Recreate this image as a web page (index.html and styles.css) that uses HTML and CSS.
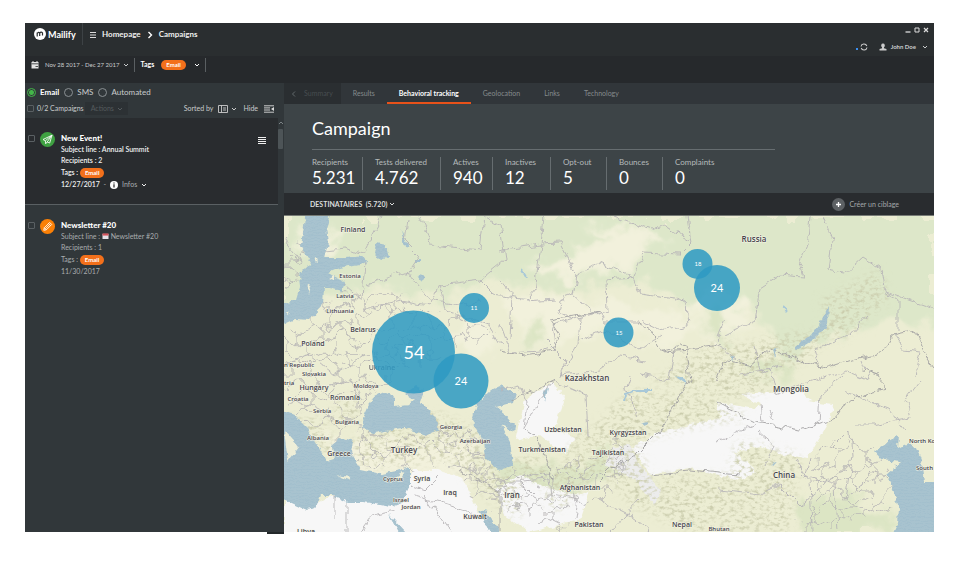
FILE: index.html
```html
<!DOCTYPE html>
<html lang="en">
<head>
<meta charset="utf-8">
<title>Mailify - Campaigns</title>
<link rel="stylesheet" href="styles.css">
</head>
<body>
<svg class="defs" width="0" height="0" aria-hidden="true">
  <symbol id="chev" viewBox="0 0 8 8"><path d="M2 3 4 5 6 3" fill="none" stroke="currentColor" stroke-width="1"/></symbol>
</svg>
<div class="app">
  <header class="top">
    <div class="brand">
      <svg class="mark" viewBox="0 0 12 12"><circle cx="6" cy="6" r="6" fill="#fff"/><path d="M3.200 8.500V4.500M3.200 5.500Q4.600 3.600 5.700 5V8M5.700 5Q7.200 3.200 8.500 4.800V7.500" fill="none" stroke="#292d2f" stroke-width="1.200"/></svg>
      <span>Mailify</span>
    </div>
    <nav class="crumbs">
      <button class="plain" aria-label="Menu"><svg class="ic8" viewBox="0 0 8 8"><path d="M1 1.500H7M1 4H7M1 6.500H7" stroke="#ddd" stroke-width="1"/></svg></button>
      <a href="#">Homepage</a>
      <svg class="ic8" viewBox="0 0 8 8"><path d="M2.500 1 5.500 4 2.500 7" fill="none" stroke="#fff" stroke-width="1.400"/></svg>
      <a href="#">Campaigns</a>
    </nav>
    <div class="right">
      <div class="winctl">
        <button class="plain" aria-label="Minimize"><svg class="ic6" viewBox="0 0 6 6"><path d="M0.500 5H5.500" stroke="#ddd" stroke-width="1.300"/></svg></button>
        <button class="plain" aria-label="Maximize"><svg class="ic6" viewBox="0 0 6 6"><path d="M1 1H5V5H1Z" fill="none" stroke="#ddd" stroke-width="1"/></svg></button>
        <button class="plain" aria-label="Close"><svg class="ic6" viewBox="0 0 6 6"><path d="M1 1 5 5M5 1 1 5" stroke="#ddd" stroke-width="1.200"/></svg></button>
      </div>
      <div class="user">
        <i class="dot"></i>
        <button class="plain" aria-label="Refresh"><svg class="ic8" viewBox="0 0 8 8"><path d="M1 3.500A3 3 0 0 1 6.800 3M7 4.500A3 3 0 0 1 1.200 5" fill="none" stroke="#ccc" stroke-width="1.100"/></svg></button>
        <button class="plain account"><svg class="ic8" viewBox="0 0 8 8"><path d="M4 .5a1.800 2 0 0 1 1 3.700L5 5.200 7.500 6V7.500H.5V6L3 5.200V4.200A1.800 2 0 0 1 4 .5Z" fill="#ccc"/></svg>John Doe<svg class="ic8 sp"><use href="#chev"/></svg></button>
      </div>
    </div>
  </header>
  <div class="filters">
    <button class="plain date"><svg class="ic8" viewBox="0 0 8 8"><path d="M.5 1H7.500V7.500H.5Z" fill="#e4e4e4"/><path d="M.5 2.800H7.500M4.500 5.500H7" stroke="#292d2f" stroke-width=".8"/><path d="M2 0V2M6 0V2" stroke="#e4e4e4"/></svg><span>Nov 28 2017 - Dec 27 2017</span><svg class="ic8"><use href="#chev"/></svg></button>
    <div class="tags"><b>Tags</b><span class="pill">Email</span><button class="plain" aria-label="More tags"><svg class="ic8"><use href="#chev"/></svg></button></div>
  </div>
  <div class="body">
    <aside class="side">
      <div class="kinds">
        <label class="on"><input type="radio" name="kind" checked>Email</label>
        <label><input type="radio" name="kind">SMS</label>
        <label><input type="radio" name="kind">Automated</label>
      </div>
      <div class="tools">
        <label><input type="checkbox">0/2 Campaigns</label>
        <button class="actions" disabled>Actions <svg class="ic8"><use href="#chev"/></svg></button>
        <span class="push">Sorted by</span>
        <button class="plain" aria-label="Sort order"><svg class="sort" viewBox="0 0 20 8"><path d="M.5 .5H9.500V7.500H.5ZM3.500 .5V7.500M5 3H8M5 5H8" fill="none" stroke="#ccc" stroke-width=".9"/><path d="m14 3 2 2 2-2" fill="none" stroke="#ccc"/></svg></button>
        <button class="plain hide">Hide<svg class="hideic" viewBox="0 0 10 8"><path d="M0 .8H10M0 2.900H6M0 5H6M0 7.200H10" stroke="#ddd" stroke-width=".9"/><path d="M10 2 7 4 10 6Z" fill="#ddd"/></svg></button>
      </div>
      <div class="listwrap">
        <ul class="list">
          <li class="item active">
            <input type="checkbox" aria-label="Select New Event!">
            <svg class="badge" viewBox="0 0 14 14"><circle cx="7" cy="7" r="7" fill="#3fa142"/><path d="M11.200 3 2.800 7 5 8.200 5.300 11 6.700 9.300 9 10.300ZM11.200 3 5 8.200M11.200 3 6.700 9.300" fill="none" stroke="#fff" stroke-width=".8"/></svg>
            <div class="info">
              <h3>New Event!</h3>
              <p>Subject line : Annual Summit</p>
              <p>Recipients : 2</p>
              <p class="tagline">Tags : <span class="pill">Email</span></p>
              <p class="when">12/27/2017 <span class="dim">&nbsp; -</span><svg class="ic8 inf" viewBox="0 0 8 8"><circle cx="4" cy="4" r="4" fill="#fff"/><path d="M4 1.500V2.500M4 3.300V6.500" stroke="#222" stroke-width="1.200"/></svg><span class="dim">Infos</span><svg class="ic8"><use href="#chev"/></svg></p>
            </div>
            <button class="plain burger" aria-label="Campaign menu"><svg class="ic8" viewBox="0 0 8 8"><path d="M0 .5H8M0 2.500H8M0 4.500H8M0 6.500H8" stroke="#eee" stroke-width="1"/></svg></button>
          </li>
          <li class="item">
            <input type="checkbox" aria-label="Select Newsletter #20">
            <svg class="badge" viewBox="0 0 14 14"><circle cx="7" cy="7" r="7" fill="#fb8006"/><path d="M3.500 10.500 4 8.200 9 3.200 10.900 5.100 5.900 10.100ZM8 4.200 9.900 6.100M4 8.200 5.900 10.100M5 9.100 8.900 5.200" fill="none" stroke="#fff" stroke-width=".8"/></svg>
            <div class="info">
              <h3>Newsletter #20</h3>
              <p>Subject line : <svg class="cal" viewBox="0 0 8 7"><path d="M.5 1H7.500V7H.5Z" fill="#e6e2e8"/><path d="M.5 .5H7.500V3H.5Z" fill="#d5545c"/></svg> Newsletter #20</p>
              <p>Recipients : 1</p>
              <p class="tagline">Tags : <span class="pill">Email</span></p>
              <p class="when">11/30/2017</p>
            </div>
          </li>
        </ul>
        <div class="scroll"><svg class="ic6" viewBox="0 0 6 6"><path d="M1 4 3 2 5 4" fill="none" stroke="#7b8285"/></svg><i></i></div>
      </div>
    </aside>
    <main class="main">
      <nav class="tabs">
        <a class="back" href="#"><svg class="ic8" viewBox="0 0 8 8"><path d="M5 1.500 2.500 4 5 6.500" fill="none" stroke="#62696c"/></svg>Summary</a>
        <a href="#">Results</a>
        <a class="cur" href="#">Behavioral tracking</a>
        <a href="#">Geolocation</a>
        <a href="#">Links</a>
        <a href="#">Technology</a>
      </nav>
      <section class="panel">
        <h1>Campaign</h1>
        <dl class="stats">
          <div><dt>Recipients</dt><dd>5.231</dd></div>
          <div><dt>Tests delivered</dt><dd>4.762</dd></div>
          <div><dt>Actives</dt><dd>940</dd></div>
          <div><dt>Inactives</dt><dd>12</dd></div>
          <div><dt>Opt-out</dt><dd>5</dd></div>
          <div><dt>Bounces</dt><dd>0</dd></div>
          <div><dt>Complaints</dt><dd>0</dd></div>
        </dl>
      </section>
      <div class="dest">
        <button class="plain">DESTINATAIRES&nbsp; (5.720)<svg class="ic8"><use href="#chev"/></svg></button>
        <button class="plain target"><svg class="plus" viewBox="0 0 13 13"><circle cx="6.500" cy="6.500" r="6.500" fill="#5d6164"/><path d="M6.500 4V9M4 6.500H9" stroke="#fff" stroke-width="1.300"/></svg>Créer un ciblage</button>
      </div>
      <svg class="map" viewBox="284 216 650 316" preserveAspectRatio="xMidYMid slice" role="img" aria-label="Recipients by location">
        <defs>
          <filter id="rough" x="284" y="216" width="650" height="316" filterUnits="userSpaceOnUse"><feTurbulence type="fractalNoise" baseFrequency=".09" numOctaves="3" seed="4"/><feDisplacementMap in="SourceGraphic" scale="9" xChannelSelector="R" yChannelSelector="G"/></filter>
          <filter id="warp" x="284" y="216" width="650" height="316" filterUnits="userSpaceOnUse"><feTurbulence type="fractalNoise" baseFrequency=".045" numOctaves="3" seed="9"/><feDisplacementMap in="SourceGraphic" scale="36" xChannelSelector="R" yChannelSelector="G"/></filter>
          <filter id="coast" x="284" y="216" width="650" height="316" filterUnits="userSpaceOnUse"><feTurbulence type="fractalNoise" baseFrequency=".16" numOctaves="2" seed="2"/><feDisplacementMap in="SourceGraphic" scale="6" xChannelSelector="R" yChannelSelector="G"/></filter>
          <filter id="soft" x="284" y="216" width="650" height="316" filterUnits="userSpaceOnUse"><feTurbulence type="fractalNoise" baseFrequency=".05" numOctaves="3" seed="7" result="n"/><feGaussianBlur in="SourceGraphic" stdDeviation="3"/><feDisplacementMap in2="n" scale="30" xChannelSelector="R" yChannelSelector="G"/></filter>
          <filter id="relief" x="284" y="216" width="650" height="316" filterUnits="userSpaceOnUse"><feTurbulence type="fractalNoise" baseFrequency=".2 .3" numOctaves="3" seed="12"/><feColorMatrix values="0 0 0 0 .6  0 0 0 0 .61  0 0 0 0 .42  3 0 0 0 -1.400" result="t"/><feGaussianBlur in="SourceGraphic" stdDeviation="5"/><feComposite in="t" operator="in"/></filter>
          <pattern id="cells" width="24" height="28" patternUnits="userSpaceOnUse"><path d="M0 5 12 0 24 5M0 5V16L12 22V28M24 5V16L12 22" fill="none" stroke="#b4b2b3" stroke-width=".9"/></pattern>
          <pattern id="waves" width="6" height="3" patternUnits="userSpaceOnUse"><rect width="6" height="3" fill="#a8c3cf"/><path d="M0 1.500Q1.500 .8 3 1.500T6 1.500" fill="none" stroke="#9cbacb" stroke-width=".5"/></pattern>
        </defs>
        <rect x="284" y="216" width="650" height="316" fill="#ecedd3"/>
        <g filter="url(#soft)">
          <path d="M270 200H950V330L900 318 850 330 790 360 750 310 690 305 640 280 560 290 500 280 440 300 380 285 330 300H270Z" fill="#dde7c9"/>
          <path d="M520 265 560 262 585 245 620 240 650 250 630 265 570 280ZM588 226 640 228 670 240 620 250ZM500 300 540 292 640 306 700 320 680 345 600 330 530 350ZM440 330 490 320 500 350 470 352ZM320 440 480 440 470 480 350 480ZM690 300 740 295 750 330 710 345ZM300 225 340 235 330 260 300 250Z" fill="#f2f1dc"/>
          <path d="M530 320 545 315 540 345 525 345ZM755 360 800 365 790 380 740 375ZM800 495 860 500 900 520 850 540 800 530ZM480 460 580 470 600 450 620 470 560 500 500 480ZM700 320 725 300 725 350Z" fill="#dce5c4"/>
        </g>
        <g fill="#f7f7f7" filter="url(#coast)">
          <path d="M284 498 306 510 334 495 402 503 413 470 437 470 462 478 480 515 500 535H284Z"/>
          <path d="M632 447 660 432 720 418 716 402 750 408 800 400 833 405 830 420 808 458 783 455 760 446 735 452 757 472 740 480 690 468 650 475Z"/>
          <path d="M525 400 552 382 565 398 555 428 575 438 565 455 540 435 515 440ZM496 490 520 475 540 485 580 495 590 490 580 520 530 532 505 515ZM740 394 800 390 812 400 770 410Z"/>
          <path d="M612 448 630 445 640 465 660 490 655 505 635 480 605 465Z" fill="#ececec"/>
        </g>
        <g filter="url(#relief)" fill="#000">
          <path d="M630 390 700 395 750 418 700 425 640 440 600 455 590 430ZM650 380 720 340 770 355 770 390 730 400ZM580 430 640 450 660 500 740 532H690L630 505 600 470 560 510 540 500ZM430 410 480 430 478 450 520 480 520 520 490 500 450 460 360 468 350 440ZM740 440 800 455 790 532 720 532 740 500 730 460ZM820 300 880 270 890 300 840 340ZM288 415 320 420 345 460 320 450ZM500 460 540 455 560 480 530 480ZM660 475 740 475 730 520 660 510ZM340 400 355 395 360 420 325 425ZM770 370 720 350 780 335 820 330 850 290 870 300 800 365Z"/>
        </g>
        <g filter="url(#warp)">
          <path d="M284 325 325 300 380 290 450 315 490 325 490 350 450 350 400 370 370 390 360 425 340 440 300 420 284 390Z" fill="url(#cells)"/>
          <path d="M355 440 440 430 480 440 520 470 490 510 440 465 360 470ZM560 460 615 440 640 450 600 500 560 490ZM284 250 300 240 330 240 305 275 284 290ZM820 440 880 450 895 510 850 532H800ZM510 470 560 480 570 532 500 510Z" fill="url(#cells)"/>
        </g>
        <g filter="url(#coast)" fill="url(#waves)">
          <path d="M306 210H332L326 228 328 243 324 258 345 258 366 256 368 262 340 268 328 273 345 282 342 291 324 287 323 305 309 320 296 319 280 326V305L296 300 300 287 299 275 311 263 301 247Z"/>
          <path d="M364 428 363 418 372 398 384 392 395 397 395 407 408 405 414 400 405 394 416 386 424 390 420 402 434 416 440 430 427 435 404 428 391 430 374 433Z"/>
          <path d="M280 410 294 415 307 428 316 443 327 462 334 460 332 445 341 438 353 442 351 453 361 470 381 474 400 470 410 467 410 485 402 503 391 507 364 502 347 502 334 495 321 495 316 508 306 510 280 498Z"/>
          <path d="M491 390 476 404 471 420 484 442 486 458 500 470 513 465 510 442 501 425 515 432 516 427 504 413 496 407 514 402 516 392 500 386Z"/>
          <path d="M479 510 487 512 500 532H488ZM388 513 394 520 405 532H399Z"/>
          <path d="M899 435 891 440 874 452 881 460 901 462 886 475 894 492 899 508 898 522 890 540H944V482L924 482 921 460 916 447 908 443 898 448Z"/>
          <path d="M829 306 828 325 813 340 797 350 794 347 811 336 821 322ZM377 243 386 245 389 257 381 260 375 254ZM401 230 406 240 410 248 405 247ZM415 258H421V262H415ZM418 275 425 277 422 282ZM542 392 549 388 546 400ZM640 423 648 421 646 426ZM773 348 777 350 775 358ZM730 356 735 358 732 362ZM773 462 777 464 774 467Z"/>
          <path d="M624 402 625 394 636 390 653 390M522 270 526 277M782 307 787 312M676 376 686 383" fill="none" stroke="#a8c8d8" stroke-width="2"/>
        </g>
        <g fill="#edeed8" filter="url(#coast)"><path d="M308 287 312 284 309 294ZM336 475 350 477 348 480ZM394 478 405 472 402 478ZM286 311 290 313 287 315ZM284 430 299 447 288 462ZM315 258 320 259 317 262ZM328 278 334 275 334 280Z"/></g>
        <g fill="none" stroke="#b8b6b8" stroke-width=".9" filter="url(#rough)">
          <path d="M284 240 300 260M325 250 345 248 362 255 382 216M365 262 362 300 345 285M368 285 410 270 420 255 405 240 408 220M420 216 430 245 480 250 484 216 500 225 505 260 480 280 440 285 430 305 400 300 362 310M405 270 430 300 460 305 480 300M480 280 495 295 530 300M500 252 512 248 541 244 544 216M541 244 560 243 577 275 573 295 560 300 558 312 573 320M541 244 535 290 525 302 555 300M573 295 596 315 607 312 606 280 633 278 643 253 680 255 692 243 688 216M577 275 598 263 633 278 640 293 675 298 686 305 688 325 660 330 641 321M610 216 650 230 665 225 690 240M500 325 510 352 540 350 555 345 552 325 600 312 605 322 637 322M545 340 565 360 560 375 600 370 620 355 645 360M500 280 512 295 510 340M580 318 578 345 560 375M580 340 605 330 640 350 660 335"/>
          <path d="M810 216 808 240 800 265 803 277 780 275 760 288 755 320 725 335M824 216 832 240 828 270 845 273 863 257 880 268 883 290 934 308M884 292 898 300 898 330M725 320 715 345 740 360M895 335 905 350 920 352 915 375M820 365 815 350 850 335 868 315M755 345 762 375 780 365M740 375 770 370 775 395 800 385 845 370 870 380 862 360M760 405 762 422M818 422 820 395 843 375M770 410 775 420M845 392 890 410 905 430M830 450 850 430 852 455 845 500 870 480 880 475M810 460 805 475 835 485 838 530M855 425 875 425 910 418 905 400 920 380M718 490 760 495 780 485 800 505 830 480 845 470M760 432 775 445 765 465M796 460 810 480 812 530M716 442 755 425M500 390 520 385 526 402 523 430 540 400 556 380M556 382 586 395 588 435M630 375 625 390 640 415M640 375 670 380 676 345M286 405 300 400 320 410 335 420 362 425M292 360 310 355 335 375 365 355M330 385 352 380 362 400M520 480 550 478 552 495 578 500 575 520M500 483 520 483 532 495M600 500 630 515 650 532M640 500 610 532M410 485 425 490 440 475M413 495 480 515M425 495 450 532M346 503V532M335 495V520M360 532 372 515 395 510M440 285 446 310 490 325 502 345"/>
          <path d="M716 402 720 405 755 422 800 430 835 418 843 405 860 395 885 388 878 375 863 370M716 380 725 360 750 365 770 348 800 360 825 368 850 360 885 352 893 335 915 330 928 360 934 368M720 345 690 350 662 352 650 330 637 322M500 350 525 355 553 350 560 335 550 320 600 312M660 352 685 345 690 380 680 395 660 432M600 480 610 470 635 455 660 430M650 475 690 470 740 475M512 400 556 380M553 480 540 440 525 430M460 470 500 490 500 532" stroke="#a3a1a3"/>
        </g>
        <g class="names">
          <g class="l"><text x="754" y="242">Russia</text><text x="587" y="381">Kazakhstan</text><text x="791" y="392">Mongolia</text><text x="784" y="478">China</text><text x="404" y="453">Turkey</text><text x="512" y="498">Iran</text></g>
          <g class="m"><text x="353" y="232">Finland</text><text x="363" y="332">Belarus</text><text x="313" y="346">Poland</text><text x="314" y="390">Hungary</text><text x="345" y="400">Romania</text><text x="339" y="456">Greece</text><text x="422" y="481">Syria</text><text x="450" y="495">Iraq</text><text x="475" y="519">Kuwait</text><text x="563" y="432">Uzbekistan</text><text x="628" y="435">Kyrgyzstan</text><text x="542" y="452">Turkmenistan</text><text x="608" y="455">Tajikistan</text><text x="580" y="490">Afghanistan</text><text x="589" y="527">Pakistan</text><text x="682" y="527">Nepal</text><text x="382" y="370" opacity=".8">Ukraine</text></g>
          <g class="s"><text x="350" y="278">Estonia</text><text x="345" y="298">Latvia</text><text x="340" y="313">Lithuania</text><text x="284" y="367" class="st">n Republic</text><text x="314" y="376">Slovakia</text><text x="284" y="385" class="st">tria</text><text x="366" y="388">Moldova</text><text x="298" y="401">Croatia</text><text x="322" y="413">Serbia</text><text x="347" y="424">Bulgaria</text><text x="318" y="440">Albania</text><text x="451" y="429">Georgia</text><text x="475" y="443">Azerbaijan</text><text x="393" y="481">Cyprus</text><text x="401" y="502">Israel</text><text x="411" y="509">Jordan</text><text x="909" y="443" class="st">North Ko</text><text x="916" y="470" class="st">South</text><text x="719" y="531">Bhutan</text></g>
          <g class="m"><text x="306" y="534">Libya</text></g>
        </g>
        <g fill="#2d9ac3" fill-opacity=".86"><circle cx="413.500" cy="352" r="41.500"/><circle cx="461" cy="381" r="27.500"/><circle cx="474" cy="308" r="15"/><circle cx="697.500" cy="264" r="15"/><circle cx="717" cy="288" r="23"/><circle cx="618.500" cy="332.500" r="15"/></g>
        <g class="nums"><text x="414" y="359" class="n3">54</text><text x="461" y="385" class="n2">24</text><text x="717" y="292" class="n2">24</text><text x="474" y="310">11</text><text x="698" y="266">18</text><text x="619" y="335">15</text></g>
      </svg>
    </main>
  </div>
</div>
</body>
</html>
```
FILE: styles.css
```css
* { box-sizing: border-box; }
body {
  margin: 0;
  padding: 23px 25px 30px;
  height: 100vh;
  background: #fff;
  font: 7px/11px Lato, "Liberation Sans", sans-serif;
  color: #c9cccd;
}
h1, h3, p, ul, dl, dd { margin: 0; padding: 0; font-weight: inherit; }
ul { list-style: none; }
a { color: inherit; text-decoration: none; }
button { font: inherit; color: inherit; }
.defs { position: absolute; }
.plain { display: flex; align-items: center; padding: 0; border: 0; background: none; }
.ic8 { width: 8px; height: 8px; flex: none; }
.ic6 { width: 6px; height: 6px; flex: none; display: block; }
.app { display: flex; flex-direction: column; height: 100%; background: #292d2f; }

.top { display: flex; height: 33px; flex: none; background: #2a2e30; }
.brand { display: flex; align-items: center; gap: 2px; width: 58px; height: 22px; padding-left: 9px; font-size: 9px; font-weight: 700; color: #fff; border-right: 1px solid #3d4245; }
.mark { width: 12px; height: 12px; flex: none; }
.crumbs { display: flex; align-items: center; gap: 5px; height: 23px; padding-left: 6px; font-size: 8px; font-weight: 700; color: #eee; }
.right { margin-left: auto; padding: 4px 5px 0 0; }
.winctl { display: flex; justify-content: flex-end; gap: 3px; height: 6px; }
.user { display: flex; align-items: center; gap: 2px; margin-top: 8px; font-size: 6px; font-weight: 700; }
.dot { width: 2px; height: 2px; margin-top: 4px; background: #3b8ff0; }
.account { gap: 4px; padding-left: 9px; }
.sp { margin-left: 1px; }

.filters { display: flex; align-items: center; height: 27px; flex: none; padding: 0 6px 10px; background: #26292c; }
.date { gap: 6px; font-size: 6px; }
.date .ic8:last-child { margin-left: -4px; }
.tags { display: flex; align-items: center; gap: 7px; height: 14px; margin-left: 4px; padding: 0 4px 0 6px; border: solid #5a5f62; border-width: 0 1px; color: #fff; }
.pill { display: inline-block; padding: 0 5px; border-radius: 6px; background: #f3701b; color: #fff; font-size: 6px; font-weight: 700; line-height: 10px; }

.body { display: flex; flex: 1; min-height: 0; }
.side { display: flex; flex-direction: column; width: 259px; flex: none; background: #31373a; }
.side::after { content: ""; flex: none; align-self: flex-end; width: 17px; height: 2px; margin-bottom: -2px; background: #23282a; }
input { appearance: none; margin: 0; flex: none; width: 7px; height: 7px; border: 1px solid #5a6063; border-radius: 1px; }
label { display: flex; align-items: center; gap: 4px; }
.kinds { display: flex; gap: 5px; height: 19px; padding-left: 2px; font-size: 8px; }
.kinds .on { font-weight: 700; color: #fff; }
input[type="radio"] { width: 9px; height: 9px; border-radius: 50%; border-color: #8a9093; }
input[type="radio"]:checked { border-color: #43b649; background: radial-gradient(circle, #43b649 2px, transparent 3px); }
.tools { display: flex; align-items: center; gap: 5px; height: 13px; padding: 0 10px 0 2px; }
.tools label { gap: 3px; margin-right: -4px; }
.actions { display: flex; align-items: center; gap: 2px; height: 13px; padding: 0 4px 0 6px; border: 0; background: #2c3134; color: #555b5e; }
.push { margin-left: auto; }
.sort { width: 20px; height: 8px; }
.hide { gap: 6px; }
.hideic { width: 10px; height: 8px; }
.listwrap { display: flex; flex: 1; margin-top: 3px; }
.list { flex: 1; }
.item { display: flex; padding: 15px 12px 14px 3px; color: #a9adaf; }
.item > input { margin: 2px 5px 0 0; }
.active { color: #f1f2f2; background: #292c2f; border-bottom: 1px solid #5a6063; font-weight: 600; }
.badge { width: 15px; height: 15px; margin: -1px 6px 0 0; flex: none; }
.info { flex: 1; }
.info h3 { font-size: 8px; font-weight: 900; color: #fff; }
.tagline { line-height: 13px; }
.when { display: flex; align-items: center; line-height: 11px; }
.dim { color: #a9adaf; font-weight: 400; }
.inf { margin: 0 4px; }
.when .ic8:last-child { margin-left: 3px; }
.cal { width: 7px; height: 6px; }
.burger { align-self: flex-start; margin-top: 4px; }
.scroll { width: 6px; background: #31373a; padding-top: 2px; }
.scroll i { display: block; width: 5px; height: 20px; margin-top: 3px; border-radius: 1px; background: #4d5457; }

.main { display: flex; flex-direction: column; flex: 1; min-width: 0; }
.tabs { display: flex; height: 21px; flex: none; background: #31363a; color: #858b8d; }
.tabs a { display: flex; align-items: center; padding: 0 12px; }
.tabs .back { gap: 6px; padding: 0 8px 0 6px; background: #2a2e31; color: #474d50; }
.tabs .cur { color: #fff; font-weight: 700; border: solid #e8521a; border-width: 0 0 2px; padding-top: 2px; }
.panel { height: 89px; flex: none; padding: 12px 28px 0; background: #3d4447; }
.panel h1 { max-width: 463px; height: 34px; border-bottom: 1px solid #666d70; color: #fff; font-size: 18px; line-height: 24px; }
.stats { display: grid; grid-template-columns: 51px 78px 52px 58px 56px 56px 1fr; padding-top: 7px; }
.stats div { height: 33px; padding-left: 12px; border-right: 1px solid #666d70; }
.stats div:first-child { padding-left: 0; }
.stats div:last-child { border: 0; }
.stats dt { font-size: 8px; line-height: 11px; color: #b5babb; }
.stats dd { font-size: 17px; line-height: 19px; color: #fff; }
.dest { display: flex; justify-content: space-between; align-items: center; height: 23px; flex: none; padding: 0 35px 0 26px; background: #292c2f; border-bottom: 1px solid #777b76; font-weight: 700; color: #dcdede; }
.dest .ic8 { margin-left: 1px; }
.dest .target { gap: 4px; font-weight: 400; color: #a4a8aa; }
.plus { width: 13px; height: 13px; }
.map { display: block; flex: 1; width: 100%; min-height: 0; }

.names { fill: #45434b; stroke: #f6f6e8; stroke-width: 1px; stroke-linejoin: round; paint-order: stroke; text-anchor: middle; font-family: "Open Sans", sans-serif; font-weight: 600; }
.l { font-size: 8px; }
.m { font-size: 7px; }
.s { font-size: 6px; }
.st { text-anchor: start; }
.nums { fill: #fff; text-anchor: middle; font-size: 6px; }
.n2 { font-size: 11px; }
.n3 { font-size: 18px; }
```
